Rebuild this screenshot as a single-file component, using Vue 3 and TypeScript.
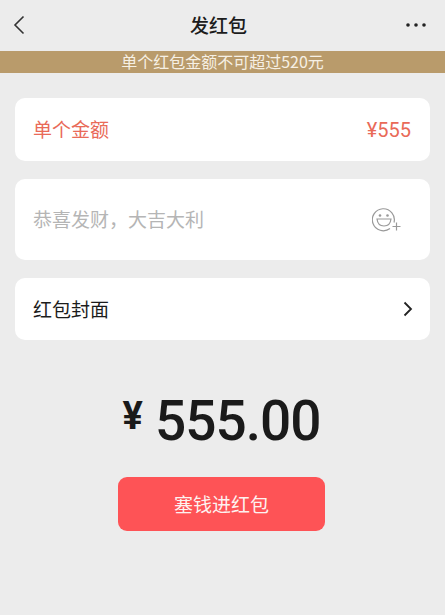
<script setup lang="ts">
const title = '发红包'
</script>

<template>
  <div class="page">
    <header class="nav">
      <svg class="back" width="14" height="22" viewBox="0 0 14 22"><path d="M11.500 2.500 L3 11 L11.500 19.500" fill="none" stroke="#333" stroke-width="1.600"/></svg>
      <span class="title">{{ title }}</span>
      <svg class="more" width="22" height="6" viewBox="0 0 22 6"><circle cx="3" cy="3" r="1.800" fill="#222"/><circle cx="11" cy="3" r="1.800" fill="#222"/><circle cx="19" cy="3" r="1.800" fill="#222"/></svg>
    </header>
    <div class="notice">单个红包金额不可超过520元</div>
    <main class="form">
      <div class="card amount">
        <span class="label">单个金额</span>
        <span class="value">¥555</span>
      </div>
      <div class="card wish">
        <span class="label">恭喜发财，大吉大利</span>
        <svg class="emoji" width="30" height="26" viewBox="0 0 30 26" fill="none" stroke="#999" stroke-width="1.200">
          <path d="M22 16.500 A11 11 0 1 0 18 22.500"/>
          <circle cx="8" cy="9.500" r="1.300" fill="#999" stroke="none"/>
          <circle cx="15.500" cy="9.500" r="1.300" fill="#999" stroke="none"/>
          <path d="M5 13 H19 C18.500 17.500 15.500 20 12 20 C8.500 20 5.500 17.500 5 13 Z"/>
          <path d="M20.500 20.500 H28.500 M24.500 16.500 V24.500"/>
        </svg>
      </div>
      <div class="card cover">
        <span class="label">红包封面</span>
        <svg width="12" height="18" viewBox="0 0 12 18"><path d="M2.500 2.500 L9 9 L2.500 15.500" fill="none" stroke="#222" stroke-width="1.800"/></svg>
      </div>
    </main>
    <div class="total"><span class="currency">¥</span><span class="num">555.00</span></div>
    <button class="submit">塞钱进红包</button>
  </div>
</template>

<style>
html, body { margin: 0; background: #ececec; }
</style>

<style scoped>
.page {
  width: 445px;
  height: 615px;
  overflow: hidden;
  background: #ececec;
  font-family: "Noto Sans CJK SC", "Noto Sans", sans-serif;
  display: flex;
  flex-direction: column;
  align-items: center;
}
.nav {
  width: 100%;
  box-sizing: border-box;
  height: 51px;
  padding: 0 18px 2px 12px;
  display: flex;
  align-items: center;
  justify-content: space-between;
}
.title { font-size: 19px; font-weight: 500; color: #1c1c1c; line-height: 26px; margin-left: 6px; }
.notice {
  width: 100%;
  height: 22px;
  line-height: 21px;
  background: #b99b6b;
  color: #f6f0e4;
  font-size: 16px;
  text-align: center;
}
.form {
  width: 100%;
  box-sizing: border-box;
  padding: 25px 15px 0 15px;
  display: flex;
  flex-direction: column;
  gap: 18px;
}
.card {
  background: #fff;
  border-radius: 10px;
  padding: 0 18px;
  display: flex;
  align-items: center;
  justify-content: space-between;
  font-size: 19px;
}
.label { margin-bottom: 2px; }
.emoji { margin-bottom: 2px; }
.amount { height: 63px; color: #e96a58; }
.value { font-family: "Roboto", "Noto Sans", sans-serif; font-size: 20px; margin-right: 1px; }
.wish { height: 81px; color: #b5b5b5; padding-right: 28px; }
.cover { height: 62px; color: #1c1c1c; padding-right: 16px; }
.total {
  margin-top: 46px;
  margin-right: 2px;
  display: flex;
  align-items: center;
  color: #1a1a1a;
  line-height: 70px;
  height: 70px;
}
.currency { font-family: "Roboto", sans-serif; font-size: 38px; font-weight: 700; margin-right: 12px; margin-top: -10px; }
.num { font-family: "Roboto", sans-serif; font-size: 55px; font-weight: 500; letter-spacing: -1px; }
.submit {
  margin-top: 21px;
  margin-right: 2px;
  width: 207px;
  height: 54px;
  padding: 0 0 2px;
  border: 0;
  border-radius: 9px;
  background: #fe5356;
  color: #fdf2f0;
  font-family: inherit;
  font-size: 19px;
}
</style>
